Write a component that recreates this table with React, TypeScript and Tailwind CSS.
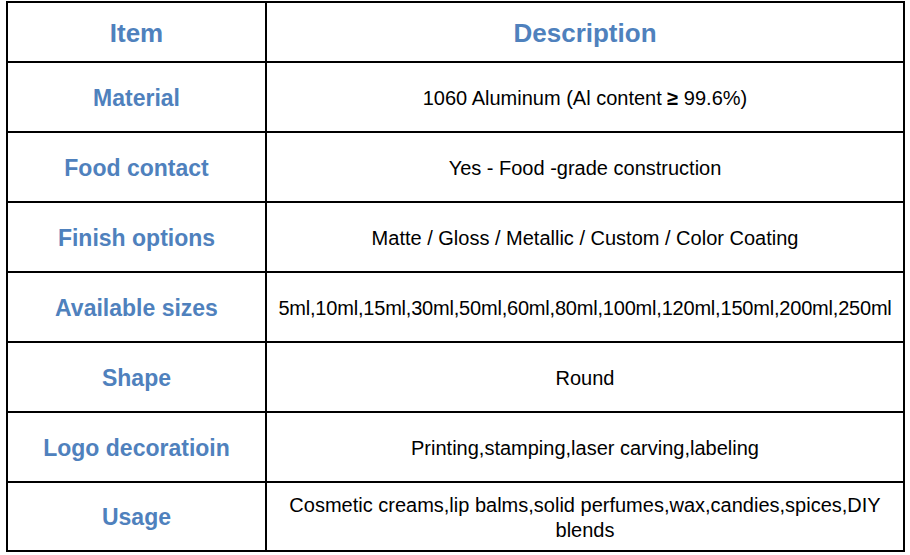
import React from 'react';

interface Row {
  item: string;
  desc: React.ReactNode;
}

const rows: Row[] = [
  { item: 'Material', desc: <>1060 Aluminum (Al content <span className="font-bold">≥</span> 99.6%)</> },
  { item: 'Food contact', desc: 'Yes - Food -grade construction' },
  { item: 'Finish options', desc: 'Matte / Gloss / Metallic / Custom / Color Coating' },
  { item: 'Available sizes', desc: '5ml,10ml,15ml,30ml,50ml,60ml,80ml,100ml,120ml,150ml,200ml,250ml' },
  { item: 'Shape', desc: 'Round' },
  { item: 'Logo decoratioin', desc: 'Printing,stamping,laser carving,labeling' },
  { item: 'Usage', desc: 'Cosmetic creams,lip balms,solid perfumes,wax,candies,spices,DIY blends' },
];

const App: React.FC = () => {
  return (
    <div className="w-[910px] h-[555px] bg-white pt-[1px] pl-[6px]" style={{ fontFamily: '"Liberation Sans", Arial, sans-serif' }}>
      <div className="w-[899px] border-2 border-black grid grid-cols-[257px_2px_636px]">
        {/* Header */}
        <div className="h-[58px] pt-[2px] flex items-center justify-center text-[26px] font-bold text-[#4F81BD]">Item</div>
        <div className="bg-black" />
        <div className="h-[58px] pt-[2px] flex items-center justify-center text-[26px] font-bold text-[#4F81BD]">Description</div>

        {rows.map((row, i) => (
          <React.Fragment key={row.item}>
            <div className="col-span-3 h-[2px] bg-black" />
            <div className={`${i === rows.length - 1 ? 'h-[67px]' : 'h-[68px]'} pt-[2px] flex items-center justify-center text-[23px] font-bold text-[#4F81BD]`}>
              {row.item}
            </div>
            <div className="bg-black" />
            <div className={`flex items-center justify-center text-center text-[20px] leading-[25px] text-black px-1 pt-[2px] ${i === 3 ? 'tracking-[-0.2px]' : ''}`}>
              <span>{row.desc}</span>
            </div>
          </React.Fragment>
        ))}
      </div>
    </div>
  );
};

export default App;
